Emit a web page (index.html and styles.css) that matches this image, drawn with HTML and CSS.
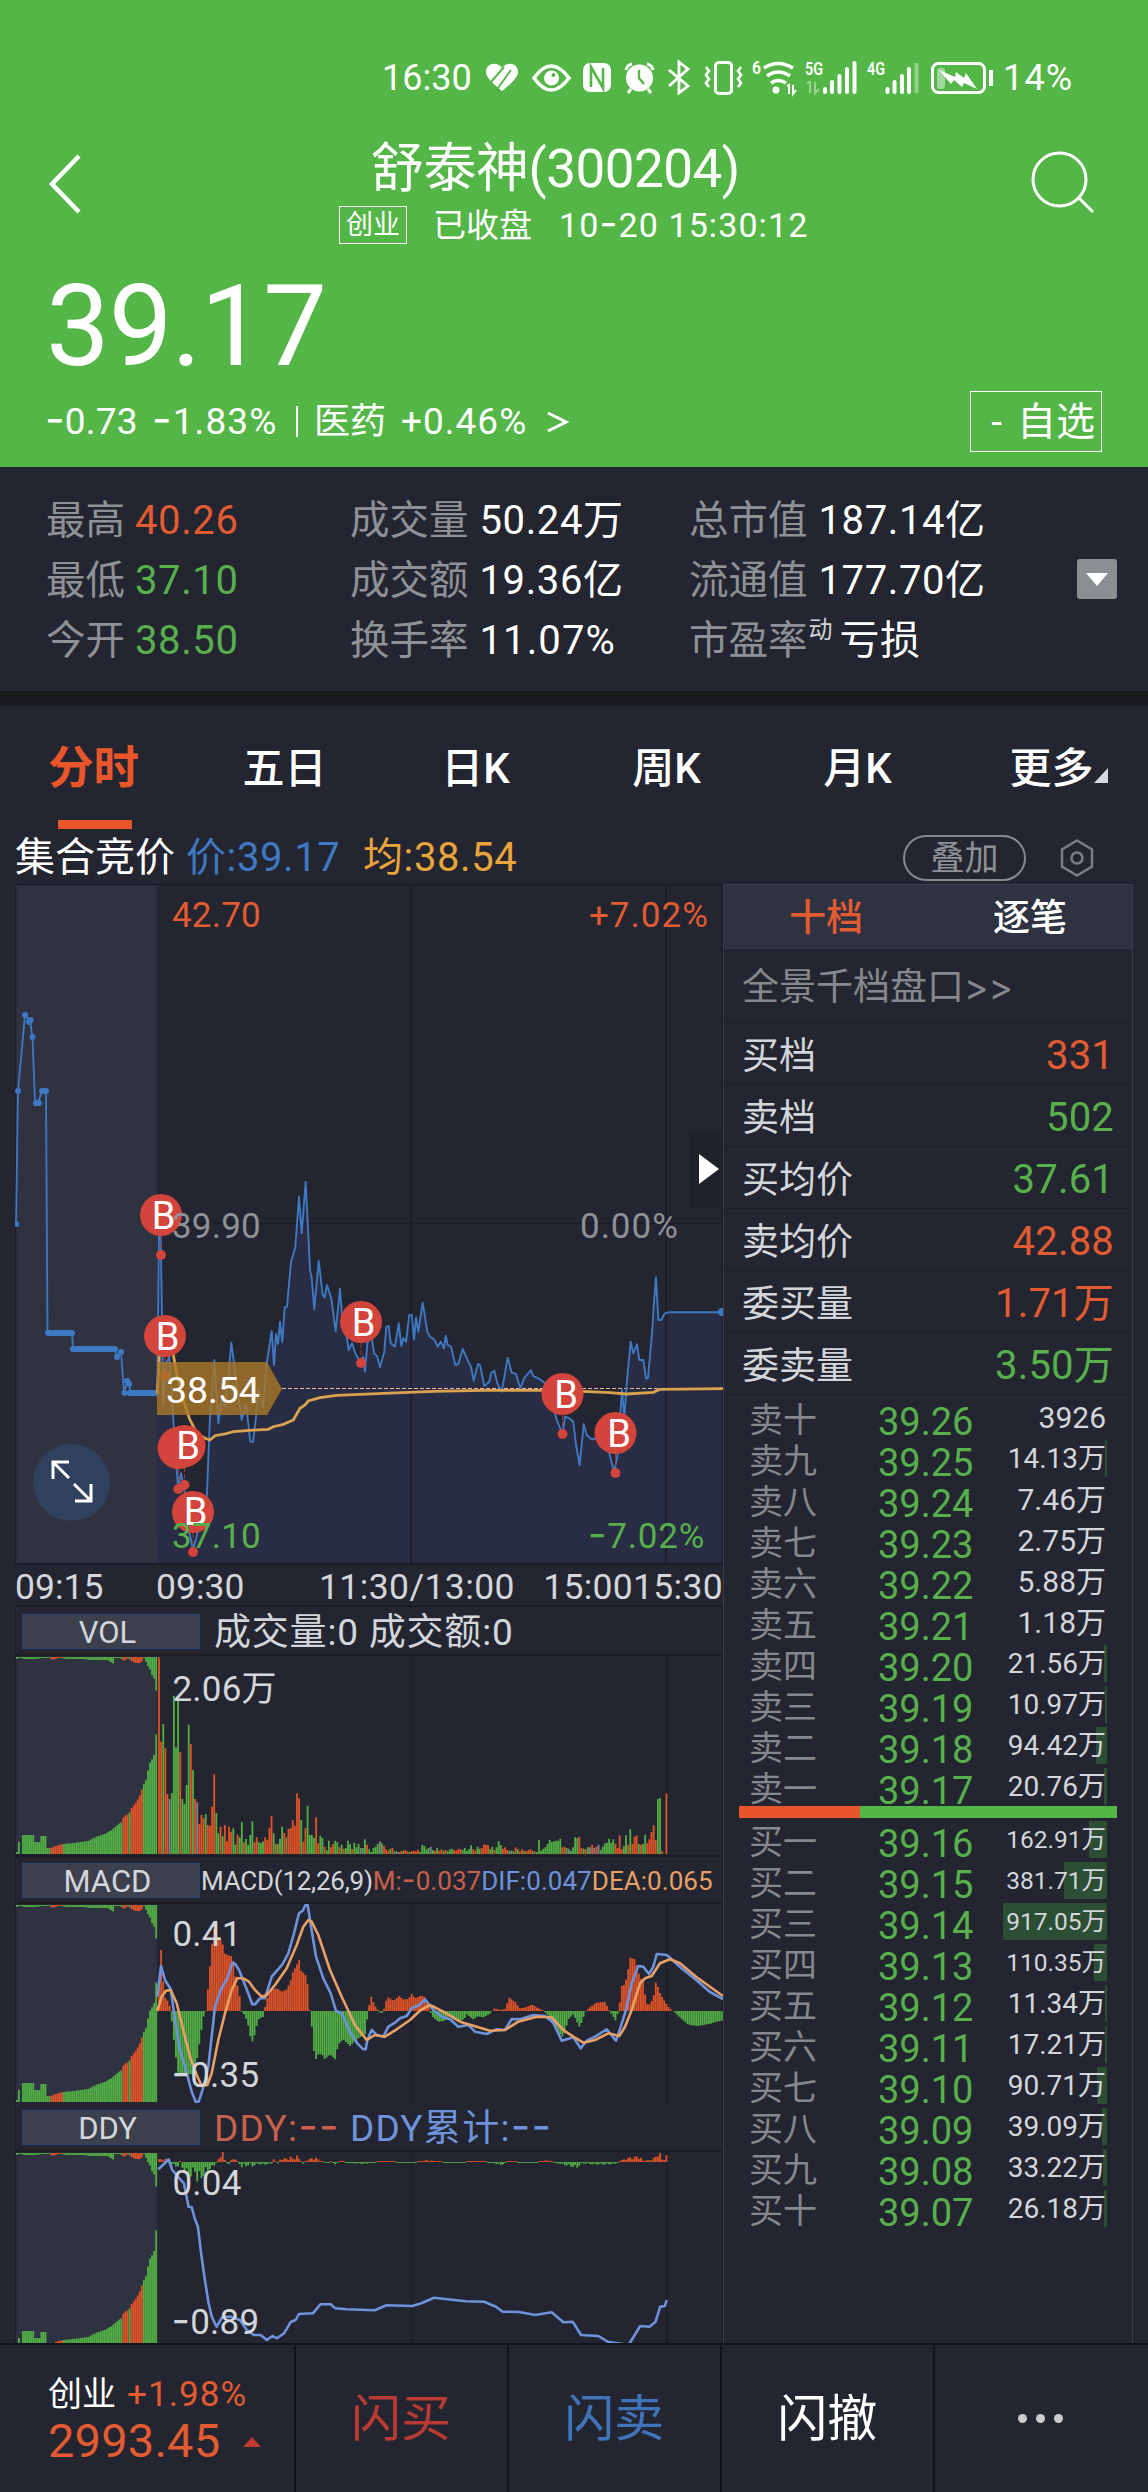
FILE: index.html
```html
<!DOCTYPE html>
<html lang="zh-CN">
<head>
<meta charset="utf-8">
<title>舒泰神(300204)</title>
<link rel="stylesheet" href="styles.css">
</head>
<body>
<div class="app">
  <header class="quote">
    <div class="status">
      <span>16:30</span>
      <svg class="status-icons" width="516" height="44" viewBox="482 56 516 44" fill="none" stroke="#fff">
        <path d="M502 91C492 83 486 77 486 72c0-9 11-11 16-4 5-7 16-5 16 4 0 5-6 11-16 19z" fill="#fff" stroke="none"/>
        <path d="M491 82l13-15M498 88l13-18" stroke="#55b648" stroke-width="2"/>
        <path d="M534 78q17-24 35 0q-18 24-35 0z" stroke-width="3.6"/>
        <circle cx="551.500" cy="78" r="7.500" fill="#fff" stroke="none"/>
        <circle cx="553.500" cy="75" r="2" fill="#55b648" stroke="none"/>
        <rect x="583" y="63" width="28" height="29" rx="7" fill="#fff" stroke="none"/>
        <path d="M591 87V67l12 21V68" stroke="#55b648" stroke-width="2.600"/>
        <circle cx="639.500" cy="78" r="13.500" fill="#fff" stroke="none"/>
        <path d="M639 70v8l5 6" stroke="#55b648" stroke-width="2.400"/>
        <path d="M626 70q1-5 6-6M653 70q-1-5-6-6M631 89l-3 4M648 89l3 4" stroke-width="3"/>
        <path d="M669 70l19 16-9 7V62l9 7-19 17" stroke-width="2.800"/>
        <rect x="715.500" y="62.500" width="16" height="31" rx="3.500" stroke-width="3"/>
        <path d="M706 67l3 4-3 4 3 4-3 4 3 4M741 67l-3 4 3 4-3 4 3 4-3 4" stroke-width="2.600"/>
        <path d="M764 68q14-9 29 0M767 76q11-8 23 0M771 83q7-5 15 0" stroke-width="3.600"/>
        <circle cx="776" cy="90" r="3.500" fill="#fff" stroke="none"/>
        <path d="M787 86l2-1v9M793 85v9l3-4" stroke-width="2"/>
        <path d="M807 83l3-1v11M815 82v11l4-4" stroke-width="2" opacity=".4"/>
        <path d="M825 89v3M832 82v10M839.500 76v16M847 69v23M854.500 63v29" stroke-width="4" stroke-linecap="round"/>
        <path d="M887.500 89v3M894.500 82v10M902 76v16M909 69v23" stroke-width="4" stroke-linecap="round"/>
        <path d="M916.500 63v30" stroke-width="4" opacity=".35"/>
        <rect x="932.500" y="63.500" width="52" height="29" rx="6" stroke-width="3"/>
        <path d="M991 70v16" stroke-width="4"/>
        <rect x="937" y="68" width="8" height="21" rx="3" fill="#fff" opacity=".45" stroke="none"/>
        <path d="M939 70l16 7 1-5 8 6 2-5 11 16-13-6-2 4-8-7-3 4z" fill="#fff" stroke="none"/>
        <g class="tiny"><text x="752" y="74" textLength="9" lengthAdjust="spacingAndGlyphs">6</text><text x="805" y="75" textLength="18" lengthAdjust="spacingAndGlyphs">5G</text><text x="867" y="75" textLength="18" lengthAdjust="spacingAndGlyphs">4G</text></g>
      </svg>
      <span>14%</span>
    </div>
    <div class="titlebar">
      <svg class="back" width="36" height="62" viewBox="0 0 36 62"><path d="M32 3L5 31l27 28"/></svg>
      <div class="names">
        <h1>舒泰神(300204)</h1>
        <div class="session"><span class="tag">创业</span><span class="closed">已收盘</span><span class="when">10<i class="m">-</i>20 15:30:12</span></div>
      </div>
      <svg class="search" width="66" height="66" viewBox="1029 150 66 66"><circle cx="1059.500" cy="179.500" r="26.500"/><path d="M1079 198l14 14"/></svg>
    </div>
    <div class="price">39.17</div>
    <div class="change">
      <span class="delta"><i class="m">-</i>0.73</span><span class="pct"><i class="m">-</i>1.83%</span><span class="sep"></span><span class="sector">医药</span><span class="sp">+0.46%</span>
      <svg width="22" height="22" viewBox="0 0 22 22"><path d="M1 2l18 9-18 9"/></svg>
      <span class="watch"><span class="minus">-</span>自选</span>
    </div>
  </header>

  <section class="stats">
    <dl class="c1">
      <div><dt>最高</dt><dd class="up">40.26</dd></div>
      <div><dt>最低</dt><dd class="down">37.10</dd></div>
      <div><dt>今开</dt><dd class="down">38.50</dd></div>
    </dl>
    <dl class="c2">
      <div><dt>成交量</dt><dd>50.24万</dd></div>
      <div><dt>成交额</dt><dd>19.36亿</dd></div>
      <div><dt>换手率</dt><dd>11.07%</dd></div>
    </dl>
    <dl class="c3">
      <div><dt>总市值</dt><dd>187.14亿</dd></div>
      <div><dt>流通值</dt><dd>177.70亿</dd></div>
      <div><dt>市盈率</dt><sup>动</sup><dd>亏损</dd></div>
    </dl>
    <div class="expand-btn"><svg width="22" height="13" viewBox="0 0 22 13"><path d="M0 0h22L11 13z"/></svg></div>
  </section>
  <div class="band"></div>

  <nav class="tabs">
    <span class="on">分时</span><span>五日</span><span>日K</span><span>周K</span><span>月K</span><span class="more">更多<b></b></span>
  </nav>
  <div class="legend">
    <span>集合竞价</span><span class="now">价:39.17</span><span class="avg">均:38.54</span>
    <span class="pill">叠加</span>
    <svg width="34" height="38" viewBox="0 0 34 38"><path d="M17 1.500l15 9v17l-15 9-15-9v-17z"/><circle cx="17" cy="19" r="5.500"/></svg>
  </div>

  <main class="board">
    <div class="charts">
      <svg class="main-chart" width="708" height="679" viewBox="15 884 708 679">
        <rect class="shade" x="16" y="885" width="141" height="678"/>
        <path class="area" id="area"/>
        <path class="grid" d="M15.500 1563V884.500H723M411 885v678M666 885v678M157 1223.500H723M722.500 885v678"/>
        <path class="dash" d="M282 1388.500H723"/>
        <path class="blue" d="M16 1224L18 1091 25 1015 30 1021 32.500 1037 35 1103H38L42 1091H46L47.500 1333H72L73 1349H115L117 1357 121 1352 124 1393 127 1381 129.500 1385 130 1393H157"/>
        <path class="dots" d="M16 1224h.1M18 1091h.1M25 1015h.1M29 1022h.1M30.500 1020h.1M32.500 1037h.1M36 1103h3M42 1091h4M48 1333h24M73 1349h42M117 1357h.1M121 1352h.1M124.500 1393h.1M127 1381h.1M129 1384h.1M130 1393h26"/>
        <path class="blue thin" id="price"/>
        <path class="gold" id="avg"/>
        <circle cx="722" cy="1312" r="4" fill="#3f78c3"/>
        <path class="stems" d="M161 1215v40M165 1336v40M178.500 1448v41M184.500 1446v39M193 1512v40M361 1322v41M562.500 1394v40M615.500 1433v40"/>
        <g class="buy">
          <circle cx="161" cy="1215" r="21"/><circle cx="165" cy="1336" r="21"/><circle cx="178.500" cy="1448" r="21"/><circle cx="184.500" cy="1446" r="21"/><circle cx="193" cy="1512" r="21"/><circle cx="361" cy="1322" r="21"/><circle cx="562.500" cy="1394" r="21"/><circle cx="615.500" cy="1433" r="21"/>
          <circle cx="161" cy="1255" r="5"/><circle cx="165" cy="1376" r="5"/><circle cx="178.500" cy="1489" r="5"/><circle cx="184.500" cy="1485" r="5"/><circle cx="193" cy="1552" r="5"/><circle cx="361" cy="1363" r="5"/><circle cx="562.500" cy="1434" r="5"/><circle cx="615.500" cy="1473" r="5"/>
        </g>
        <g class="buy-text">
          <text x="163.500" y="1229">B</text><text x="167.500" y="1350">B</text><text x="188" y="1459">B</text><text x="195.500" y="1525">B</text><text x="363.500" y="1336">B</text><text x="566" y="1408">B</text><text x="619" y="1447">B</text>
        </g>
        <path class="flag" d="M157 1362H267L282 1389 267 1415H157z"/>
        <text class="flag-text" x="166" y="1403">38.54</text>
        <text class="ax up" x="172" y="927">42.70</text>
        <text class="ax up" x="589" y="927" textLength="119">+7.02%</text>
        <text class="ax mute" x="172" y="1238">39.90</text>
        <text class="ax mute" x="580" y="1238" textLength="98">0.00%</text>
        <text class="ax down" x="172" y="1548">37.10</text>
        <text class="ax down neg" x="588" y="1548"><tspan class="m">-</tspan>7.02%</text>
        <rect x="689" y="1131" width="34" height="77" fill="#1e2129"/>
        <path d="M699 1154l20 15-20 15z" fill="#fff"/>
        <circle cx="71.500" cy="1482.500" r="38.500" fill="#2f415c"/>
        <path class="arrows" d="M69 1462H53v17M53 1462l16 16M75 1501h16v-17M91 1501l-17-17"/>
      </svg>
      <div class="times"><span>09:15</span><span>09:30</span><span>11:30/13:00</span><span>15:00</span><span>15:30</span></div>

      <div class="ind"><b>VOL</b><span class="wide">成交量:0 成交额:0</span></div>
      <svg width="708" height="199" viewBox="15 1656 708 199">
        <rect class="shade" x="16" y="1657" width="141" height="197"/>
        <path class="grid" d="M15.500 1656v199M411.500 1656v199M666.500 1656v199M722.500 1656v199"/>
        <g class="auction" data-base="1854" data-top="1657"></g>
        <g id="vol"></g>
        <text class="ax lite" x="172.500" y="1701">2.06万</text>
      </svg>
      <div class="ind macd"><b>MACD</b><span>MACD(12,26,9)</span><span class="r">M:<i class="m">-</i>0.037</span><span class="b">DIF:0.047</span><span class="o">DEA:0.065</span></div>
      <svg width="708" height="199" viewBox="15 1904 708 199">
        <rect class="shade" x="16" y="1905" width="141" height="197"/>
        <path class="grid" d="M15.500 1904v199M411.500 1904v199M666.500 1904v199M722.500 1904v199"/>
        <g class="auction" data-base="2102" data-top="1905"></g>
        <g id="macd"></g>
        <path class="line dif" id="dif"/>
        <path class="line dea" id="dea"/>
        <text class="ax lite" x="172.500" y="1946">0.41</text>
        <text class="ax lite" x="171.500" y="2087"><tspan class="m">-</tspan>0.35</text>
      </svg>
      <div class="ind"><b>DDY</b><span class="wide ddy r">DDY:<i class="m">--</i></span><span class="b ddy second">DDY累计:<i class="m">--</i></span></div>
      <svg width="708" height="191" viewBox="15 2152 708 191">
        <rect class="shade" x="16" y="2153" width="141" height="190"/>
        <path class="grid" d="M15.500 2152v191M411.500 2152v191M666.500 2152v191M722.500 2152v191"/>
        <g class="auction" data-base="2350" data-top="2153"></g>
        <g id="ddy"></g>
        <path class="line dif" id="ddyline"/>
        <text class="ax lite" x="172.500" y="2195">0.04</text>
        <text class="ax lite" x="171.500" y="2334"><tspan class="m">-</tspan>0.89</text>
      </svg>
    </div>

    <aside class="book">
      <div class="book-tabs"><span class="up">十档</span><span>逐笔</span></div>
      <div class="full">全景千档盘口<i>&gt;&gt;</i></div>
      <div class="row"><span>买档</span><span class="up">331</span></div>
      <div class="row"><span>卖档</span><span class="down">502</span></div>
      <div class="row"><span>买均价</span><span class="down">37.61</span></div>
      <div class="row"><span>卖均价</span><span class="up">42.88</span></div>
      <div class="row"><span>委买量</span><span class="up">1.71万</span></div>
      <div class="row"><span>委卖量</span><span class="down">3.50万</span></div>
      <div class="ladder">
        <div class="lv"><span>卖十</span><span>39.26</span><span class="q">3926</span></div>
        <div class="lv"><span>卖九</span><span>39.25</span><span class="q s"><u style="width:2px"></u>14.13万</span></div>
        <div class="lv"><span>卖八</span><span>39.24</span><span class="q">7.46万</span></div>
        <div class="lv"><span>卖七</span><span>39.23</span><span class="q">2.75万</span></div>
        <div class="lv"><span>卖六</span><span>39.22</span><span class="q">5.88万</span></div>
        <div class="lv"><span>卖五</span><span>39.21</span><span class="q">1.18万</span></div>
        <div class="lv"><span>卖四</span><span>39.20</span><span class="q s"><u style="width:3px"></u>21.56万</span></div>
        <div class="lv"><span>卖三</span><span>39.19</span><span class="q s"><u style="width:2px"></u>10.97万</span></div>
        <div class="lv"><span>卖二</span><span>39.18</span><span class="q s"><u style="width:11px"></u>94.42万</span></div>
        <div class="lv"><span>卖一</span><span>39.17</span><span class="q s"><u style="width:3px"></u>20.76万</span></div>
      </div>
      <div class="ratio"><b></b></div>
      <div class="ladder">
        <div class="lv"><span>买一</span><span>39.16</span><span class="q xs"><u style="width:18px"></u>162.91万</span></div>
        <div class="lv"><span>买二</span><span>39.15</span><span class="q xs"><u style="width:43px"></u>381.71万</span></div>
        <div class="lv"><span>买三</span><span>39.14</span><span class="q xs"><u style="width:104px"></u>917.05万</span></div>
        <div class="lv"><span>买四</span><span>39.13</span><span class="q xs"><u style="width:13px"></u>110.35万</span></div>
        <div class="lv"><span>买五</span><span>39.12</span><span class="q s"><u style="width:2px"></u>11.34万</span></div>
        <div class="lv"><span>买六</span><span>39.11</span><span class="q s"><u style="width:2px"></u>17.21万</span></div>
        <div class="lv"><span>买七</span><span>39.10</span><span class="q s"><u style="width:10px"></u>90.71万</span></div>
        <div class="lv"><span>买八</span><span>39.09</span><span class="q s"><u style="width:5px"></u>39.09万</span></div>
        <div class="lv"><span>买九</span><span>39.08</span><span class="q s"><u style="width:4px"></u>33.22万</span></div>
        <div class="lv"><span>买十</span><span>39.07</span><span class="q s"><u style="width:3px"></u>26.18万</span></div>
      </div>
    </aside>
  </main>

  <footer class="bottom">
    <div class="index">
      <div class="i1"><span>创业</span><span class="up">+1.98%</span></div>
      <div class="i2 up">2993.45<svg width="18" height="10" viewBox="0 0 18 10"><path d="M9 0l9 10H0z"/></svg></div>
    </div>
    <div class="act buyc">闪买</div>
    <div class="act sellc">闪卖</div>
    <div class="act">闪撤</div>
    <div class="act dots3"><b></b><b></b><b></b></div>
  </footer>
</div>
<script src="charts.js"></script>
</body>
</html>
```
FILE: styles.css
```css
* { box-sizing: border-box; }
body { margin: 0; background: #232530; color: #fff; font-family: Roboto, "Noto Sans CJK SC", sans-serif; line-height: 1; }
i { font-style: normal; }
u { text-decoration: none; }
.m { font-family: Inter, Roboto, sans-serif; font-size: 1.15em; line-height: 0; }
.up { color: #e25b31; fill: #e25b31; }
.down { color: #58b04d; fill: #58b04d; }
.app { width: 1148px; height: 2492px; display: flex; flex-direction: column; overflow: hidden; white-space: nowrap; }

.quote { height: 467px; background: #55b648; flex: none; }
.status { height: 128px; padding: 28px 0 0 382px; display: flex; align-items: center; font-size: 36px; }
.status-icons { margin: 0 5px 0 10px; flex: none; }
.status span:first-child { width: 90px; }
.status span:last-child { letter-spacing: 1.2px; }
.tiny text { fill: #fff; stroke: none; font: 600 19px "Roboto"; }
.titlebar { height: 127px; display: flex; padding-left: 47px; }
.back { margin-top: 25px; fill: none; stroke: #fff; stroke-width: 4.5; }
.names { flex: 1; padding-left: 256px; }
h1 { margin: 14px 0 0 32px; font-size: 53px; line-height: 54px; font-weight: 400; letter-spacing: -.5px; }
.session { display: flex; align-items: center; height: 40px; margin-top: 9px; }
.tag { width: 68px; height: 38px; border: 1px solid #fff; font-size: 27px; line-height: 36px; text-align: center; }
.closed { font-size: 33px; margin-left: 26px; }
.when { font-size: 34px; margin-left: 27px; letter-spacing: 1.1px; }
.search { margin: 22px 53px 0 0; fill: none; stroke: #fff; stroke-width: 3; }
.price { height: 136px; padding: 15px 0 0 46px; font-size: 113.5px; letter-spacing: -1px; }
.change { height: 76px; padding: 0 46px 15px 45px; display: flex; align-items: center; font-size: 37px; }
.delta { width: 107px; letter-spacing: .2px; }
.pct { width: 144px; letter-spacing: 1.1px; }
.sep { width: 2px; height: 31px; background: #fff; margin-right: 16px; }
.sector { width: 87px; font-size: 36px; }
.sp { width: 146px; letter-spacing: 1px; }
.change svg { fill: none; stroke: #fff; stroke-width: 3; }
.watch { margin-left: auto; width: 132px; height: 61px; border: 1.5px solid #fff; font-size: 39px; line-height: 60px; text-align: right; padding-right: 6px; }
.minus { margin-right: 15px; }

.stats { height: 224px; flex: none; padding-top: 24px; display: flex; position: relative; font-size: 39.5px; padding-left: 46px; }
dl { margin: 0; }
dl > div { height: 60px; display: flex; align-items: center; }
dt { color: #8e9196; margin-right: 10px; }
dd { margin: 0; font-size: 40px; letter-spacing: .6px; }
.c1 { width: 304px; }
.c2 { width: 339px; }
.c2 dt, .c3 dt { margin-right: 11px; }
.c2 div:last-child dd { letter-spacing: 1.1px; }
.c3 { width: 388px; }
sup { font-size: 24px; color: #d0d3d8; margin: -22px 7px 0 -10px; }
.expand-btn { margin-top: 68px; width: 40px; height: 40px; border-radius: 3px; background: #8a8f92; display: flex; align-items: center; justify-content: center; }
.expand-btn svg { fill: #fff; }
.band { height: 15px; background: #1a1b1f; flex: none; }

.tabs { height: 124px; flex: none; display: grid; grid-template-columns: repeat(6, 191px); margin-left: -2px; font-size: 42px; font-weight: 500; text-align: center; }
.tabs span { height: 124px; line-height: 126px; }
.tabs .on { color: #e8562a; font-size: 45.5px; font-weight: 700; position: relative; }
.tabs .on::after { content: ""; position: absolute; left: 60px; top: 114px; width: 74px; height: 9px; background: #e8562a; }
.tabs .more { padding-left: 20px; }
.more b { display: inline-block; border-left: 14px solid transparent; border-bottom: 15px solid #d5d8dd; }
.legend { height: 54px; flex: none; display: flex; align-items: center; padding: 2px 54px 0 15px; font-size: 40px; }
.now { color: #3f78c3; margin-left: 11px; width: 177px; letter-spacing: .6px; }
.avg { color: #eaa43c; letter-spacing: .6px; }
.pill { margin-left: auto; width: 123px; height: 46px; border: 2px solid #85888c; border-radius: 23px; color: #8e9196; font-size: 34px; line-height: 42px; text-align: center; margin-right: 34px; }
.legend svg { fill: none; stroke: #7b7e85; stroke-width: 2.5; }

.board { height: 1459px; flex: none; display: flex; padding-left: 15px; }
.charts { width: 708px; height: 1459px; }
.charts > svg { display: block; }
.shade { fill: #2f3241; }
.grid { fill: none; stroke: #1a1c26; stroke-width: 1.5; }
.area { fill: #282d43; }
.blue { fill: none; stroke: #3f78c3; stroke-width: 1.8; }
.thin { stroke-width: 1.9; stroke-linejoin: round; }
.dots { fill: none; stroke: #3f78c3; stroke-width: 6; stroke-linecap: round; }
.gold { fill: none; stroke: #dba250; stroke-width: 2.8; }
.dash { stroke: #e8b8a0; stroke-width: 1.2; stroke-dasharray: 4 2; }
.stems { stroke: #a13a40; stroke-width: 1; stroke-dasharray: 5 2; }
.buy { fill: #d2443c; }
.buy-text { fill: #fff; font-size: 38px; text-anchor: middle; }
.flag { fill: #aa7828; fill-opacity: .8; }
.flag-text { fill: #fff; font-size: 37.5px; letter-spacing: -.1px; }
.ax { font-size: 35px; letter-spacing: .2px; }
.neg { letter-spacing: .8px; }
.mute { fill: #8e9196; }
.lite { fill: #d3d6db; }
.arrows { fill: none; stroke: #fff; stroke-width: 3; }
.times { height: 44px; border-top: 2px solid #1a1c26; border-bottom: 2px solid #1a1c26; display: flex; align-items: center; font-size: 35.5px; color: #d3d6db; padding-top: 5px; }
.times span:nth-child(1) { width: 141px; }
.times span:nth-child(2) { width: 163px; }
.times span:nth-child(3) { margin-right: auto; letter-spacing: .4px; }
.times span:nth-child(n+4) { letter-spacing: .3px; }
.ind { height: 49px; border-left: 1px solid #1a1c26; border-right: 1px solid #1a1c26; border-bottom: 2px solid #1a1c26; display: flex; align-items: center; font-size: 37px; color: #d3d6db; padding: 3px 0 0 6px; }
.ind b { flex: none; width: 178px; height: 35px; margin-top: -2px; background: #3b404c; border: 1px solid #2d4270; font-weight: 400; font-size: 31px; line-height: 35px; text-align: center; padding-right: 7px; }
.ind .wide { margin-left: 14px; letter-spacing: .8px; }
.ind .ddy { letter-spacing: 1.3px; }
.ind .second { margin-left: 10px; }
.macd { font-size: 26px; border-top: 2px solid #1a1c26; }
.macd b { margin-right: 1px; }
.macd span { letter-spacing: -.25px; }
.macd span + span { letter-spacing: .05px; }
.r { color: #c8604c; }
.b { color: #6e93dc; }
.o { color: #e8a066; }
.line { fill: none; stroke-width: 2.6; stroke-linejoin: round; }
.dif { stroke: #6e93dc; }
.dea { stroke: #e8a066; }

.book { width: 410px; height: 1459px; border: 1px solid #3a3e4a; border-bottom: 0; }
.book-tabs { height: 64px; background: #2f3241; display: flex; font-size: 37px; padding: 2px 0 0 65px; align-items: center; font-weight: 500; }
.book-tabs span { width: 204px; flex: none; }
.full { height: 74px; border-bottom: 1px solid #1a1c26; color: #85888c; font-size: 37px; line-height: 75px; padding-left: 18px; }
.full i { font-family: Inter; font-size: 37px; }
.row { height: 62px; border-bottom: 1px solid #1a1c26; display: flex; justify-content: space-between; align-items: center; padding: 5px 18px 0 18px; font-size: 37px; color: #d3d6db; }
.row span + span { font-size: 40px; letter-spacing: .2px; }
.ladder { padding: 4px 0 0; }
.lv { height: 41px; display: flex; color: #85888c; font-size: 34px; padding: 0 25px 0 25px; line-height: 42px; }
.lv span:nth-child(2) { width: 96px; margin-left: 61px; color: #58b04d; font-size: 38px; line-height: 47px; }
.q { margin-left: auto; width: 104px; height: 37px; color: #d3d6db; font-size: 30px; line-height: 37px; text-align: right; position: relative; isolation: isolate; padding-right: 1px; }
.q u { position: absolute; right: 0; top: 0; height: 37px; background: #2c4e35; z-index: -1; }
.q.s { font-size: 28px; }
.q.xs { font-size: 24.5px; }
.ratio { height: 12px; margin: -3px 15px -1px; background: #55b648; position: relative; }
.ratio b { display: block; width: 121px; height: 12px; background: #e8552a; }

.bottom { height: 149px; flex: none; display: flex; border-top: 2px solid #12141c; }
.index { width: 296px; padding: 30px 0 0 48px; border-right: 2px solid #12141c; }
.i1 { font-size: 35px; display: flex; align-items: center; height: 38px; }
.i1 span:first-child { font-size: 34px; width: 79px; }
.i1 .up { letter-spacing: 1.1px; }
.i2 { font-size: 47px; margin-top: 3px; height: 48px; display: flex; align-items: center; letter-spacing: .2px; }
.i2 svg { fill: #c0392f; margin: 3px 0 0 23px; }
.act { width: 213.5px; border-right: 2px solid #12141c; font-size: 50px; line-height: 149px; text-align: center; }
.buyc { color: #b83a33; }
.sellc { color: #3f74bb; }
.dots3 { border: 0; display: flex; gap: 9px; align-items: center; justify-content: center; padding-right: 2px; }
.dots3 b { width: 9px; height: 9px; border-radius: 50%; background: #ccc; }
```
FILE: charts.js
```js
const NS = 'http://www.w3.org/2000/svg';
const RED = '#e25327', GREEN = '#52b045', GREY = '#83868c', OLIVE = '#a08038';

function addPath(parent, d, color, width) {
  const p = document.createElementNS(NS, 'path');
  p.setAttribute('d', d);
  p.setAttribute('stroke', color);
  p.setAttribute('stroke-width', width);
  parent.appendChild(p);
}

// Series are stored in thirds of a pixel, measured from (150, oy).
function toPoints(list, oy) {
  return list.trim().split(/\s+/).map(s => {
    const [x, y] = s.split(',').map(Number);
    return [150 + x / 3, oy + y / 3];
  });
}
const join = pts => 'M' + pts.map(p => p[0].toFixed(1) + ' ' + p[1].toFixed(1)).join('L');
const setD = (id, d) => document.getElementById(id).setAttribute('d', d);

function lerp(knots, x) {
  if (x <= knots[0][0]) return knots[0][1];
  for (let i = 1; i < knots.length; i++) {
    if (x <= knots[i][0]) {
      const [a, b] = [knots[i - 1], knots[i]];
      return a[1] + (b[1] - a[1]) * (x - a[0]) / (b[0] - a[0]);
    }
  }
  return knots[knots.length - 1][1];
}
const knots = s => s.trim().split(/\s+/).map(t => t.split(',').map(Number));

const price = toPoints(`22,670 27,160 32,200 37,500 40,705 48,580 58,560 68,720 75,830 84,950 93,910 103,960 118,1085 129,1140 145,1080 150,1040 170,990 180,740 193,570 205,760 215,690 225,710 233,640 244,518 260,640 275,750 288,700 301,815 309,815 318,740 325,655 340,712 350,580 365,483 372,585 378,492 384,522 390,455 397,516 404,413 411,410 423,275 436,232 447,80 455,190 467,35 480,300 485,325 493,418 506,272 518,375 524,382 531,345 544,385 557,484 570,356 577,450 590,500 596,540 606,520 616,550 632,580 640,560 645,605 652,520 665,500 672,550 682,560 690,592 703,545 709,470 716,468 722,520 735,530 746,460 754,528 760,505 768,515 778,435 785,435 792,508 798,443 805,485 818,398 832,485 840,500 852,508 863,530 872,515 882,535 887,497 893,525 903,530 916,585 925,582 938,537 955,575 963,590 971,632 984,582 990,585 1003,648 1018,635 1023,610 1033,602 1042,640 1055,665 1073,563 1085,608 1098,612 1111,655 1122,625 1143,600 1150,618 1170,628 1185,640 1205,690 1220,750 1238,793 1245,740 1258,745 1270,755 1278,825 1289,885 1301,762 1310,795 1325,808 1340,805 1360,800 1378,850 1392,905 1402,860 1416,660 1423,740 1432,620 1442,515 1450,550 1461,523 1468,570 1480,570 1488,626 1494,624 1507,480 1511,410 1518,322 1525,450 1533,450 1545,430 1555,427 1719,427`, 1170);
setD('price', join(price));
setD('area', join(price) + 'L723 1563L157 1563Z');
setD('avg', join(toPoints(`22,670 28,560 45,500 62,510 70,555 80,610 100,690 118,745 140,790 165,805 180,810 195,797 225,792 250,785 300,781 355,778 370,770 400,763 430,750 450,715 465,705 475,693 510,683 560,676 700,670 850,664 1000,661 1175,661 1300,664 1380,668 1430,672 1510,667 1530,658 1719,656`, 1170)));

setD('dif', join(toPoints(`22,1040 33,948 45,990 62,1018 75,1110 90,1200 105,1250 125,1325 137,1355 146,1355 158,1318 175,1250 195,1070 212,1020 232,985 247,938 256,942 268,962 290,1018 307,1063 315,1063 330,1045 345,1045 365,980 398,942 415,910 432,850 447,790 458,782 466,766 473,766 480,810 498,920 520,985 542,1030 558,1083 575,1090 600,1145 622,1180 640,1198 647,1198 652,1170 665,1140 680,1155 700,1160 715,1130 735,1118 750,1105 770,1098 785,1075 808,1065 825,1048 850,1080 875,1100 900,1108 925,1130 955,1125 975,1145 1010,1152 1040,1138 1065,1140 1085,1107 1110,1108 1150,1095 1185,1098 1210,1118 1235,1172 1270,1162 1292,1195 1310,1172 1335,1160 1370,1138 1398,1172 1412,1130 1428,1080 1445,1000 1465,948 1480,950 1497,972 1510,950 1520,912 1550,915 1565,928 1590,951 1645,995 1680,1026 1719,1047`, 1650)));
setD('dea', join(toPoints(`22,1083 35,1040 48,1022 62,1020 80,1060 100,1140 120,1220 140,1275 155,1308 172,1305 185,1270 205,1170 225,1090 245,1020 262,985 280,985 297,995 315,1020 335,1040 350,1035 375,1005 410,955 440,885 460,830 475,810 485,815 505,855 540,960 575,1040 615,1125 650,1170 675,1155 705,1160 740,1138 780,1110 812,1080 840,1065 880,1085 930,1115 980,1130 1020,1142 1065,1140 1105,1115 1160,1100 1205,1102 1240,1140 1270,1160 1300,1178 1335,1170 1375,1150 1408,1158 1425,1130 1445,1080 1470,1000 1485,985 1505,978 1530,940 1560,928 1590,940 1640,982 1719,1038`, 1650)));

// Cumulative DDY curve, on the panel's own horizontal scale.
const ddy = knots(`340,598 350,585 362,568 370,600 385,625 395,640 405,710 412,712 418,745 425,770 432,850 440,930 448,1000 455,1040 465,1070 478,1040 495,1040 515,1050 530,1080 545,1095 560,1095 573,1110 585,1098 595,1105 610,1090 625,1055 635,1050 642,1032 672,1030 688,1003 710,1003 720,1015 745,1018 805,1021 830,1006 885,1008 905,1000 932,983 1000,994 1040,995 1065,1010 1080,1025 1115,1026 1150,1035 1185,1027 1210,1057 1230,1055 1248,1095 1285,1098 1305,1115 1350,1125 1375,1068 1395,1070 1408,1055 1418,1010 1428,1008 1432,990`);
setD('ddyline', join(ddy.map(([x, y]) => [x * 0.4656, 1970 + y / 3])));

const barX = i => 159 + i * 2.123;
function bars(id, base, values) {
  const d = {};
  values.forEach(([color, h], i) => {
    d[color] = (d[color] || '') + `M${barX(i).toFixed(2)} ${base}v${(-h / 3).toFixed(1)}`;
  });
  for (const c in d) addPath(document.getElementById(id), d[c], c, 1.8);
}

const vol = `r590 r337 g390 r317 r180 x165 g182 g475 g320 g462 r306 g165 g150 g207 g388 r330 g252 r165 x155 r90 r117 r107 g120 r87 r85 r142 r240 g123 g62 r82 g53 r87 r38 r82 r67 g77 g28 r58 g50 g96 r35 g45 g28 g57 g98 r35 r50 g35 g33 g38 r50 r42 r77 r115 g62 o30 o30 g45 g82 r63 o50 r75 r78 r102 r85 r182 r167 g102 r37 r78 g145 g57 g57 g48 r110 r32 g55 g48 r22 g12 g40 r20 r30 g40 g35 r20 g28 r15 g18 g40 g30 r15 g34 g20 g30 x18 g18 g44 r28 g14 g6 g18 g22 g30 x38 g32 r25 r14 r10 g16 r18 g8 x8 x6 r8 g10 r12 r8 g6 r8 r10 r6 g18 g36 r10 r8 r12 g6 g28 g24 g14 g18 x22 g12 r10 g18 r10 r14 g10 r12 g8 g14 g16 r12 r10 r16 r14 g12 g18 g10 g14 g26 r14 r10 g22 g16 r18 r28 r28 r26 g14 g22 r12 g20 g38 g26 r16 r20 r12 g10 x10 g8 r20 g14 r8 r14 g10 r8 r12 r14 g10 r8 g6 g42 g10 g16 g20 g30 g42 g36 g38 g40 g40 g46 r20 r22 g18 x16 g10 g20 g50 g48 r52 r18 g16 r14 g20 x20 r28 x18 r22 x28 g12 g22 g32 g34 g46 g34 g44 r30 r18 r56 r14 g24 g56 r28 g74 r30 r52 r56 g30 r28 g30 g58 r32 r44 r66 r86 r42 g165 g168 r8 x0 r182`
  .split(' ').map(t => [{ r: RED, g: GREEN, x: GREY, o: OLIVE }[t[0]], +t.slice(1)]);
while (vol.length > 240) vol.splice(120, 1);
while (vol.length < 240) vol.splice(120, 0, [RED, 8]);
bars('vol', 1854, vol);

const hist = knots(`27,90 33,188 40,85 46,40 53,30 59,15 65,-30 72,-90 78,-140 84,-185 91,-190 129,-190 135,-170 142,-140 148,-100 154,-60 161,-15 167,-3 173,60 180,135 186,200 193,250 199,240 205,222 212,215 218,200 225,170 244,165 250,150 256,105 263,75 269,45 275,-2 282,-10 288,-22 295,-45 301,-75 307,-92 314,-72 320,-45 326,-25 333,-20 340,-18 345,10 352,40 365,65 380,68 396,58 410,65 420,85 428,115 441,140 447,155 454,120 460,115 466,110 473,80 479,5 486,-50 492,-120 498,-145 505,-130 515,-130 525,-145 540,-130 556,-145 565,-100 580,-85 600,-105 620,-85 645,-70 652,-20 658,20 664,43 672,22 682,5 692,-8 700,-2 708,30 716,42 730,30 747,45 760,35 775,35 785,52 795,38 810,45 822,45 835,20 845,-15 865,-32 885,-30 895,-15 910,-25 930,-35 945,-20 950,-10 970,-25 985,-15 1000,-20 1020,-8 1033,8 1050,3 1065,5 1078,40 1095,28 1110,8 1125,10 1145,20 1165,8 1180,2 1195,-15 1215,-50 1240,-80 1255,-25 1270,-10 1290,-50 1305,-5 1315,8 1340,25 1365,28 1380,-2 1398,-30 1404,-5 1410,30 1416,78 1425,78 1432,110 1441,160 1455,155 1470,100 1480,90 1490,20 1500,20 1510,40 1518,88 1530,55 1545,28 1558,10 1575,-5 1596,-25 1617,-42 1645,-45 1680,-38 1719,-28`);
bars('macd', 2011, Array.from({ length: 267 }, (_, i) => {
  const h = lerp(hist, 27 + i * 6.37);
  return [h > 0 ? RED : GREEN, h];
}));

const flow = knots(`27,8 33,16 40,5 46,10 52,18 60,-5 72,-10 84,-15 90,6 96,-16 120,-50 128,-30 135,-28 142,-60 150,-45 158,-50 165,-30 190,-15 199,-3 205,16 212,14 218,36 224,12 235,-12 243,10 262,6 275,-16 282,-8 290,-14 300,-6 307,-14 320,-6 345,-8 365,-5 371,8 385,-6 392,12 415,10 422,16 430,8 441,20 447,10 460,-5 470,8 498,14 505,8 530,-6 545,3 556,-7 575,4 600,-4 645,-6 700,3 780,-4 830,6 900,-3 1000,3 1055,-10 1070,2 1150,-3 1190,5 1230,-6 1284,-18 1292,-4 1340,-8 1400,-6 1412,5 1440,14 1470,18 1478,4 1500,6 1510,12 1518,16 1524,30 1531,26 1538,3 1550,22`);
bars('ddy', 2162, Array.from({ length: 240 }, (_, i) => {
  let h = lerp(flow, 27 + i * 6.37) * (i % 3 === 1 ? 0.55 : 1);
  if (Math.abs(h) < 3) h = h < 0 ? -3 : 3;
  return [h > 0 ? RED : GREEN, h];
}));

// Opening-auction profile: rising bars from the floor, hanging bars from the top.
const rise = knots('34,2 37,2 39,12 41,12 42,0 48,0 49,19 72,19 73,12 86,12 87,18 101,18 102,6 107,6 110,6 125,9 137,10 158,11 190,13 205,17 225,20 240,24 255,30 262,32 266,38 277,40 281,45 290,50 298,56 303,62 307,68 315,75 320,90 327,95 332,100 334,112 337,127');
const hang = knots('34,3 38,1 44,1 55,2 75,2 90,1 108,1 112,3 126,1 135,1 140,2 178,2 190,3 230,3 238,5 245,7 247,1 258,1 266,4 275,1 283,4 290,6 300,6 306,4 308,0 312,3 316,8 322,12 328,20 332,22 334,30 337,37');
const tint = x => (x > 108 && x < 137) || (x > 263 && x < 275) || (x > 279 && x < 305) ? RED : GREEN;
document.querySelectorAll('.auction').forEach(g => {
  const d = { [RED]: '', [GREEN]: '' };
  for (let px = 16.8; px < 158; px += 2.05) {
    const x = px / 0.4656;
    d[tint(x)] += `M${px.toFixed(2)} ${g.dataset.base}v${-lerp(rise, x).toFixed(1)}M${px.toFixed(2)} ${g.dataset.top}v${lerp(hang, x).toFixed(1)}`;
  }
  for (const c in d) addPath(g, d[c], c, 1.8);
});
```
